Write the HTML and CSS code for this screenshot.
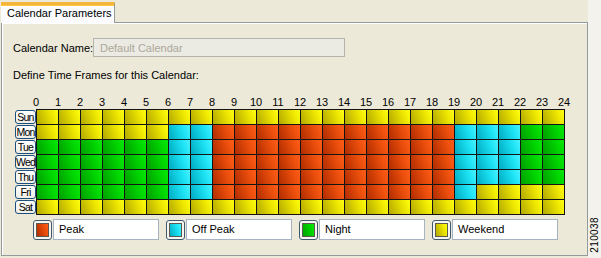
FILE: index.html
```html
<!DOCTYPE html>
<html lang="en">
    <head>
        <title>Calendar Parameters</title>
        <meta charset="UTF-8">
    <link rel="stylesheet" href="styles.css">
    </head>
<body>
    <div class="window">
        <div class="tabs">
            <div class="tab">Calendar Parameters</div>
        </div>
        <div class="pane">
            <div class="name_row">
                <span class="name_label">Calendar Name:</span>
                <input class="name_input" value="Default Calendar" disabled>
            </div>
            <div class="section_title">Define Time Frames for this Calendar:</div>

            <div class="scheduler">
                <div></div>
                <div class="hours" id="hours"></div>
                <div class="days">
                    <div class="day">Sun</div>
                    <div class="day">Mon</div>
                    <div class="day">Tue</div>
                    <div class="day">Wed</div>
                    <div class="day">Thu</div>
                    <div class="day">Fri</div>
                    <div class="day">Sat</div>
                </div>
                <div class="grid" id="grid"></div>
            </div>

            <div class="legend">
                <div class="legend_item">
                    <div class="swatch"><div class="swatch_color peak"></div></div>
                    <div class="legend_box">Peak</div>
                </div>
                <div class="legend_item">
                    <div class="swatch"><div class="swatch_color offpeak"></div></div>
                    <div class="legend_box">Off Peak</div>
                </div>
                <div class="legend_item">
                    <div class="swatch"><div class="swatch_color night"></div></div>
                    <div class="legend_box">Night</div>
                </div>
                <div class="legend_item">
                    <div class="swatch"><div class="swatch_color weekend"></div></div>
                    <div class="legend_box">Weekend</div>
                </div>
            </div>
        </div>
    </div>
    <div class="side">
        <span class="fig_id">210038</span>
    </div>

    <script>
        // one string per day, one letter per hour
        const week = [
            'YYYYYYYYYYYYYYYYYYYYYYYY',
            'YYYYYYCCRRRRRRRRRRRCCCGG',
            'GGGGGGCCRRRRRRRRRRRCCCGG',
            'GGGGGGCCRRRRRRRRRRRCCCGG',
            'GGGGGGCCRRRRRRRRRRRCCCGG',
            'GGGGGGCCRRRRRRRRRRRCYYYY',
            'YYYYYYYYYYYYYYYYYYYYYYYY'
        ];
        const kinds = { Y: 'weekend', C: 'offpeak', R: 'peak', G: 'night' };

        const hours = document.getElementById('hours');
        for (let h = 0; h <= 24; h++) {
            const span = document.createElement('span');
            span.textContent = h;
            hours.appendChild(span);
        }

        const grid = document.getElementById('grid');
        week.forEach(day => {
            for (const c of day) {
                const cell = document.createElement('div');
                cell.className = 'cell ' + kinds[c];
                grid.appendChild(cell);
            }
        });
    </script>
</body>
</html>
```

FILE: styles.css
```css
body {
    margin: 0;
    padding: 0;
    font-family: 'Liberation Sans', Arial, sans-serif;
    font-size: 11px;
    color: #000;
    background-color: #f3f2ec;
    display: flex;
    width: 601px;
    height: 258px;
    overflow: hidden;
}

.window {
    width: 588px;
    background-color: #ece9d8;
}

.tabs {
    height: 22px;
    padding-left: 1px;
    display: flex;
    align-items: flex-end;
}

.tab {
    position: relative;
    z-index: 1;
    box-sizing: border-box;
    width: 114px;
    height: 21px;
    margin-bottom: -1px;
    padding-left: 6px;
    line-height: 16px;
    white-space: nowrap;
    background-color: #fcfcfe;
    border-top: 3px solid #f5b53c;
    border-right: 1px solid #919b9c;
    box-shadow: inset 0 1px 0 #ffc83c;
}

.pane {
    margin-left: 1px;
    height: 232px;
    border: 1px solid #919b9c;
    box-shadow: inset 1px 1px 0 #fff;
}

.name_row {
    display: flex;
    align-items: center;
    margin: 15px 0 0 11px;
}

.name_label {
    flex: none;
    width: 80px;
    white-space: nowrap;
}

.name_input {
    box-sizing: border-box;
    width: 252px;
    height: 19px;
    margin: 0;
    padding: 0 0 0 6px;
    border: 1px solid #b4b3ac;
    background-color: #ebeae3;
    color: #aca899;
    font-family: 'Liberation Sans', Arial, sans-serif;
    font-size: 11px;
}

.section_title {
    margin: 11px 0 0 11px;
    line-height: 14px;
}

.scheduler {
    display: grid;
    grid-template-columns: 21px 529px;
    margin: 14px 0 0 13px;
}

.hours {
    display: flex;
    margin-left: -11px;
    height: 13px;
    line-height: 12px;
}

.hours span {
    width: 22px;
    flex: none;
    text-align: center;
}

.days {
    display: flex;
    flex-direction: column;
    gap: 1px;
    padding-top: 1px;
}

.day {
    box-sizing: border-box;
    height: 14px;
    border: 1px solid #1d4f7c;
    border-radius: 3px;
    background: linear-gradient(#ffffff, #eeede6);
    font-size: 10.5px;
    line-height: 12px;
    text-align: center;
    letter-spacing: -0.8px;
    white-space: nowrap;
    display: flex;
    justify-content: center;
}

.grid {
    display: grid;
    grid-template-columns: repeat(24, 21px);
    grid-auto-rows: 14px;
    gap: 1px;
    padding: 1px;
    background-color: #141414;
}

.peak {
    background: linear-gradient(70deg, #b02c00, #ea4e0c 65%, #ff5d18);
}

.offpeak {
    background: linear-gradient(70deg, #00abc0, #1ce2f4 65%, #48f2ff);
}

.night {
    background: linear-gradient(70deg, #009e00, #00d400 65%, #08e808);
}

.weekend {
    background: linear-gradient(70deg, #b2a800, #ebe400 65%, #ffff10);
}

.legend {
    display: flex;
    gap: 7px;
    margin: 4px 0 0 31px;
}

.legend_item {
    display: flex;
    gap: 1px;
}

.swatch {
    box-sizing: border-box;
    width: 19px;
    height: 20px;
    margin-top: 1px;
    border: 1px solid #3e5870;
    border-radius: 3px;
    background-color: #f6f5f0;
    display: flex;
    align-items: center;
    justify-content: center;
}

.swatch_color {
    width: 13px;
    height: 14px;
    border: 1px solid #5a5a50;
    box-sizing: border-box;
}

.legend_box {
    box-sizing: border-box;
    width: 106px;
    height: 21px;
    padding-left: 5px;
    line-height: 19px;
    border: 1px solid #a5b3c4;
    background-color: #fff;
}

.side {
    flex: 1;
    display: flex;
    align-items: flex-end;
    justify-content: center;
    padding-bottom: 5px;
}

.fig_id {
    writing-mode: vertical-rl;
    transform: rotate(180deg);
    font-size: 10px;
    letter-spacing: 0.4px;
}
```
